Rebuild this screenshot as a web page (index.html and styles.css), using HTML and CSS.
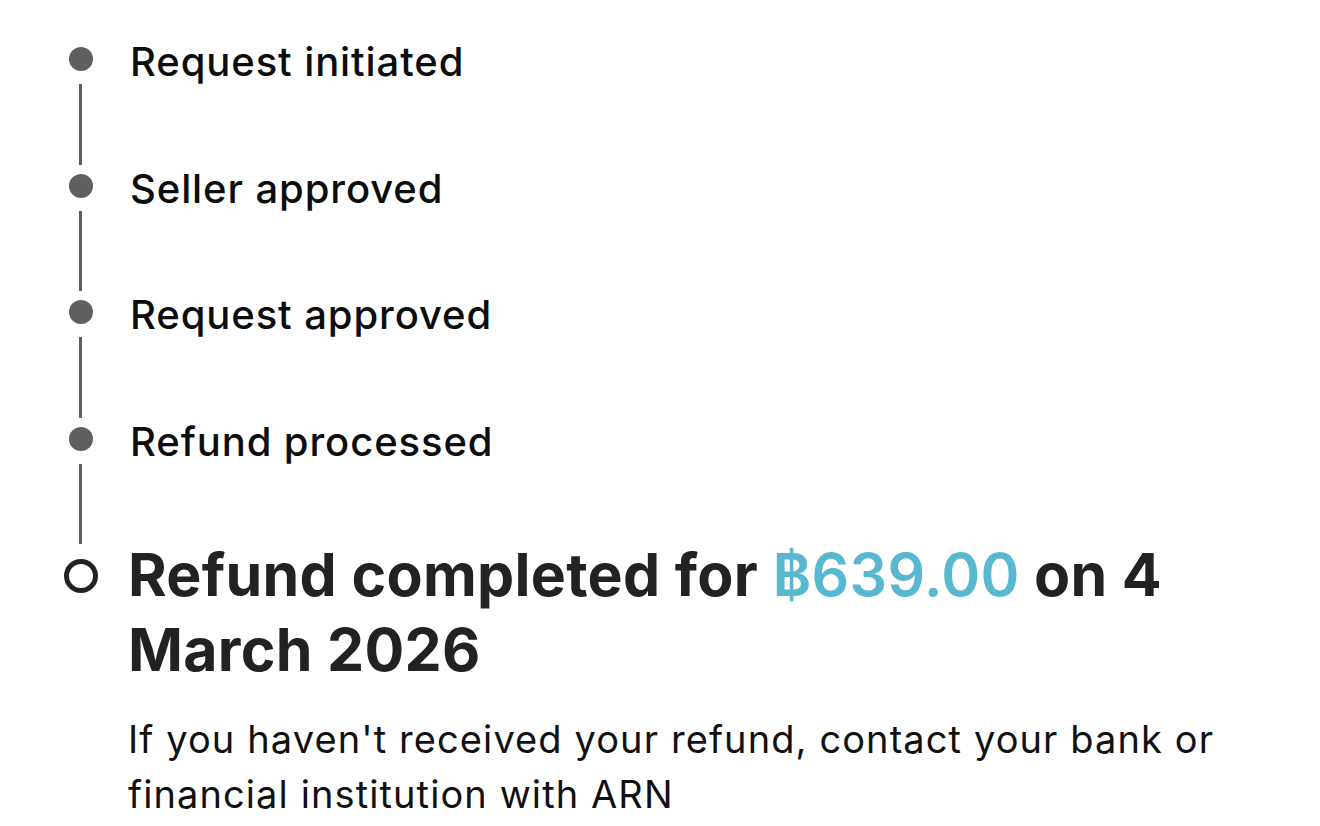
FILE: index.html
```html
<!DOCTYPE html>
<html>
<head>
<meta charset="utf-8">
<link rel="stylesheet" href="styles.css">
</head>
<body>
<div class="timeline">
  <div class="step">
    <div class="rail"><span class="dot"></span><span class="line"></span></div>
    <div class="label">Request initiated</div>
  </div>
  <div class="step">
    <div class="rail"><span class="dot"></span><span class="line"></span></div>
    <div class="label">Seller approved</div>
  </div>
  <div class="step">
    <div class="rail"><span class="dot"></span><span class="line"></span></div>
    <div class="label">Request approved</div>
  </div>
  <div class="step">
    <div class="rail"><span class="dot"></span><span class="line"></span></div>
    <div class="label">Refund processed</div>
  </div>
  <div class="step current">
    <div class="rail"><span class="ring"></span></div>
    <div class="content">
      <h1 class="headline">Refund completed for <span class="amount">฿639.00</span> on 4 March 2026</h1>
      <p class="note">If you haven't received your refund, contact your bank or financial institution with ARN</p>
    </div>
  </div>
</div>
</body>
</html>
```
FILE: styles.css
```css
html, body {
  margin: 0;
  padding: 0;
  background: #ffffff;
}
body {
  font-family: Inter, "Noto Sans", sans-serif;
  color: #111111;
  width: 1320px;
  height: 826px;
  overflow: hidden;
}
.timeline {
  padding: 38px 0 0 68px;
  display: flex;
  flex-direction: column;
}
.step {
  display: flex;
  column-gap: 37px;
  padding-bottom: 78.5px;
}
.rail {
  width: 25px;
  display: flex;
  flex-direction: column;
  align-items: center;
  margin-bottom: -78.5px;
}
.dot {
  width: 24px;
  height: 24px;
  border-radius: 50%;
  background: #5f5f5f;
  margin-top: 9px;
  flex: none;
}
.line {
  width: 3px;
  flex: 1;
  background: #5f5f5f;
  margin-top: 13px;
}
.label {
  font-size: 40px;
  font-weight: 500;
  line-height: 48px;
  letter-spacing: 0.9px;
  color: #0d0d0d;
}
.step.current {
  padding-bottom: 0;
  column-gap: 35px;
  margin-top: -7px;
}
.step.current .rail {
  margin-bottom: 0;
}
.ring {
  width: 34px;
  height: 34px;
  flex: none;
  box-sizing: border-box;
  border: 5px solid #222222;
  border-radius: 50%;
  margin-top: 22px;
}
.content {
  flex: 1;
}
.headline {
  margin: 0;
  font-size: 59px;
  font-weight: 700;
  line-height: 75px;
  letter-spacing: 0.3px;
  color: #222222;
  width: 1100px;
}
.amount {
  color: #58b8d0;
  font-weight: 600;
}
.note {
  margin: 25px 0 0;
  font-size: 38px;
  line-height: 55px;
  letter-spacing: 1.1px;
  color: #111111;
  width: 1130px;
}
```
